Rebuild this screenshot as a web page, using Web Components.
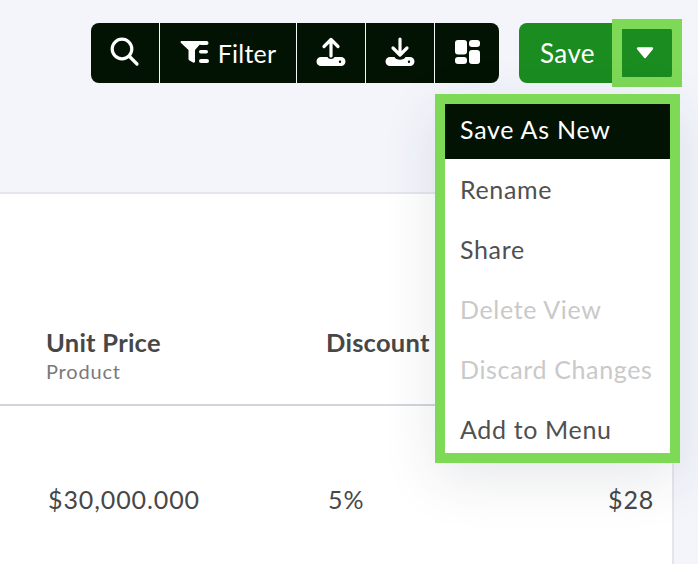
<!DOCTYPE html>
<html lang="en">
<head>
<meta charset="UTF-8">
<title>View actions</title>
<style>
  html, body { margin: 0; height: 100%; background: #f3f5fb; overflow: hidden; }
  body { display: flex; flex-direction: column; font-family: Lato, "Open Sans", sans-serif; color: #474747; }
</style>
</head>
<body>

<template id="tool-button-tpl">
  <style>
    :host { display: flex; align-items: center; justify-content: center; gap: 8px; box-sizing: border-box;
      width: var(--w, 69px); height: 60px; border-right: 1px solid #f3f5fb; color: #fff; font-size: 25px; letter-spacing: .2px; }
    :host([last]) { border-right: 0; }
    ::slotted(svg) { margin-top: -2px; }
  </style>
  <slot></slot>
</template>

<template id="tool-bar-tpl">
  <style>
    :host { display: flex; background: #021304; border-radius: 8px; overflow: hidden; }
  </style>
  <slot></slot>
</template>

<template id="save-split-tpl">
  <style>
    :host { display: flex; position: relative; width: 153px; height: 60px; background: #1a8c20; border-radius: 8px; color: #fff; font-size: 26px; letter-spacing: .4px; }
    .label { width: 97px; display: flex; align-items: center; justify-content: center; }
    .mark { position: absolute; left: 93px; top: -4px; width: 50px; height: 48px; border: 10px solid #7ed957;
      display: flex; align-items: center; justify-content: center; }
    svg { display: block; margin: 0 4px 1px 0; }
  </style>
  <div class="label"><slot></slot></div>
  <div class="mark">
    <svg width="18" height="12" viewBox="0 0 18 12"><path d="M2 1.500h14L9 10z" fill="#fff" stroke="#fff" stroke-width="2.400" stroke-linejoin="round"/></svg>
  </div>
</template>

<template id="menu-list-tpl">
  <style>
    :host { display: block; position: absolute; left: 435px; top: 94px; width: 225px; height: 349px; border: 10px solid #7ed957;
      background: #fff; overflow: hidden; box-shadow: 0 16px 52px rgba(40,44,60,.11); }
    .inner { margin-top: -5px; }
  </style>
  <div class="inner"><slot></slot></div>
</template>

<template id="menu-item-tpl">
  <style>
    :host { display: flex; align-items: center; height: 60px; padding-left: 15px; font-size: 25px; letter-spacing: .65px; color: #505050; }
    :host([active]) { background: #021304; color: #fff; letter-spacing: .75px; }
    :host([disabled]) { color: #c9c9c9; }
  </style>
  <slot></slot>
</template>

<template id="data-card-tpl">
  <style>
    :host { display: block; flex: 1; margin-right: 24px; box-sizing: border-box; background: #fff;
      border-top: 2px solid #e4e6ee; border-right: 2px solid #e4e6ee; }
    .head, .row { display: grid; grid-template-columns: 280px 282px 1fr; padding-left: 46px; }
    .head { height: 212px; box-sizing: border-box; align-items: end; padding-bottom: 20px; border-bottom: 2px solid #d2d5dc; }
    .row { padding-top: 76px; font-size: 25px; letter-spacing: .9px; line-height: 34px; }
    .row span:nth-child(2) { padding-left: 2px; }
    .title { font-weight: 700; font-size: 25.5px; line-height: 30px; letter-spacing: .25px; margin-bottom: 1px; }
    .sub { font-size: 20px; line-height: 26px; color: #7a7a7a; letter-spacing: .8px; }
    .disc { padding-bottom: 26px; }
    .price { padding-left: 2px; }
  </style>
  <div class="head">
    <div><div class="title">Unit Price</div><div class="sub">Product</div></div>
    <div class="disc"><div class="title">Discount</div></div>
  </div>
  <div class="row"><span class="price">$30,000.000</span><span>5%</span><span>$28</span></div>
</template>

<template id="top-bar-tpl">
  <style>
    :host { display: flex; flex: none; justify-content: flex-end; gap: 20px; box-sizing: border-box; height: 192px; padding: 23px 26px 0 0; align-items: flex-start; }
  </style>
  <slot></slot>
</template>

<top-bar>
  <tool-bar>
    <tool-button>
      <svg width="30" height="30" viewBox="0 0 30 30" fill="none" stroke="#fff" stroke-width="3.200" stroke-linecap="round"><circle cx="12" cy="12" r="9.800"/><path d="M19.500 19.500l7.500 7.500"/></svg>
    </tool-button>
    <tool-button style="--w:137px">
      <svg width="30" height="24" viewBox="0 0 30 24" fill="#fff"><path d="M1.500 1h19c1 0 1.400 1 .8 1.800L15 10v11.500c0 1-1 1.500-2 1L9.500 20.500c-.8-.5-1-1-1-2V10L.8 2.800C.2 2 .6 1 1.500 1z"/><rect x="19" y="1" width="9.500" height="4" rx="2"/><rect x="19" y="10" width="9" height="3.500" rx="1.700"/><rect x="19" y="19" width="10" height="4" rx="2"/></svg>
      <span>Filter</span>
    </tool-button>
    <tool-button>
      <svg width="30" height="30" viewBox="0 0 30 30"><path d="M15 19V3M8 9.500L15 2.500l7 7" fill="none" stroke="#fff" stroke-width="3.200" stroke-linecap="round" stroke-linejoin="round"/><path fill-rule="evenodd" fill="#fff" d="M5 20h6.500c.8 2.500 6.200 2.500 7 0H25a4.500 4.500 0 0 1 0 9H5a4.500 4.500 0 0 1 0-9zM24 23.500a1.200 1.200 0 1 0 0 2.400 1.200 1.200 0 0 0 0-2.400z"/></svg>
    </tool-button>
    <tool-button>
      <svg width="30" height="30" viewBox="0 0 30 30"><path d="M15 17.500V2M8 11l7 7 7-7" fill="none" stroke="#fff" stroke-width="3.200" stroke-linecap="round" stroke-linejoin="round"/><path fill-rule="evenodd" fill="#fff" d="M5 20h4.500c1.500 3.500 9.500 3.500 11 0H25a4.500 4.500 0 0 1 0 9H5a4.500 4.500 0 0 1 0-9zM24 23.500a1.200 1.200 0 1 0 0 2.400 1.200 1.200 0 0 0 0-2.400z"/></svg>
    </tool-button>
    <tool-button last style="--w:64px">
      <svg width="25" height="24" viewBox="0 0 25 24" fill="#fff"><rect x="0" y="0" width="12" height="14.500" rx="3"/><rect x="0" y="17" width="12" height="7" rx="3"/><rect x="14" y="0" width="11" height="7" rx="3"/><rect x="14" y="10" width="11" height="14" rx="3"/></svg>
    </tool-button>
  </tool-bar>
  <save-split>Save</save-split>
</top-bar>

<data-card></data-card>

<menu-list>
  <menu-item active>Save As New</menu-item>
  <menu-item>Rename</menu-item>
  <menu-item>Share</menu-item>
  <menu-item disabled>Delete View</menu-item>
  <menu-item disabled>Discard Changes</menu-item>
  <menu-item>Add to Menu</menu-item>
</menu-list>

<script>
  // every element is just its template stamped into an open shadow root
  function register(name) {
    const tpl = document.getElementById(name + '-tpl');
    customElements.define(name, class extends HTMLElement {
      constructor() {
        super();
        this.attachShadow({ mode: 'open' }).append(tpl.content.cloneNode(true));
      }
    });
  }
  ['top-bar', 'tool-bar', 'tool-button', 'save-split', 'data-card', 'menu-list', 'menu-item'].forEach(register);
</script>
</body>
</html>
